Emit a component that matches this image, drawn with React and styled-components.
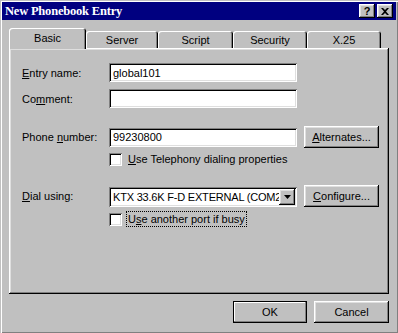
import styled, { createGlobalStyle } from "styled-components";

const GlobalStyle = createGlobalStyle`
  html, body {
    margin: 0;
    padding: 0;
    background: #c0c0c0;
  }
  body {
    font-family: "Liberation Sans", Arial, sans-serif;
    font-size: 11px;
    color: #000;
  }
  u {
    text-decoration: underline;
    text-decoration-thickness: 1px;
    text-underline-offset: 1px;
  }
`;

const raised = `
  box-shadow: inset -1px -1px #000, inset 1px 1px #fff,
    inset -2px -2px #808080, inset 2px 2px #dfdfdf;
`;

const sunken = `
  box-shadow: inset 1px 1px #808080, inset -1px -1px #fff,
    inset 2px 2px #000, inset -2px -2px #dfdfdf;
`;

const Window = styled.div`
  box-sizing: border-box;
  width: 398px;
  height: 333px;
  padding: 2px;
  background: #c0c0c0;
  box-shadow: inset 1px 1px #c0c0c0, inset 2px 2px #fff, inset -1px -1px #808080;
  display: flex;
  flex-direction: column;
`;

const TitleBar = styled.div`
  height: 18px;
  background: #000080;
  display: flex;
  align-items: center;
  padding: 0 3px 0 3px;
`;

const Title = styled.span`
  color: #fff;
  font-family: "Liberation Serif", "Times New Roman", serif;
  font-weight: bold;
  font-size: 12.5px;
  letter-spacing: -0.2px;
`;

const CaptionButtons = styled.div`
  margin-left: auto;
  display: flex;
  gap: 2px;
`;

const CaptionButton = styled.div`
  width: 16px;
  height: 14px;
  background: #c0c0c0;
  ${raised}
  display: flex;
  align-items: center;
  justify-content: center;
  font-weight: bold;
  font-size: 11px;
  line-height: 1;
`;

const Content = styled.div`
  padding: 8px 7px 0 7px;
  display: flex;
  flex-direction: column;
`;

const TabRow = styled.div`
  height: 20px;
  display: flex;
  align-items: flex-end;
`;

const Tab = styled.div`
  box-sizing: border-box;
  width: ${(p) => p.$w}px;
  height: ${(p) => (p.$active ? 21 : 17)}px;
  margin-bottom: ${(p) => (p.$active ? -1 : 0)}px;
  position: relative;
  z-index: ${(p) => (p.$active ? 2 : 1)};
  background: #c0c0c0;
  border-top-left-radius: 3px;
  border-top-right-radius: 3px;
  box-shadow: inset 1px 1px #fff, inset -1px 0 #000, inset -2px 0 #808080;
  display: flex;
  justify-content: center;
  padding-top: ${(p) => (p.$active ? 4 : 3)}px;
  font-size: 11px;
`;

const Panel = styled.div`
  box-sizing: border-box;
  height: 246px;
  ${raised}
  padding: 15px 0 0 13px;
  display: flex;
  flex-direction: column;
`;

const Row = styled.div`
  display: flex;
  align-items: ${(p) => p.$align || "center"};
  height: ${(p) => p.$h}px;
  margin-top: ${(p) => p.$mt || 0}px;
`;

const Label = styled.span`
  width: 87px;
  flex: none;
  align-self: center;
`;

const TextBox = styled.div`
  box-sizing: border-box;
  width: 188px;
  height: 19px;
  background: #fff;
  ${sunken}
  padding: 0 4px;
  display: flex;
  align-items: center;
`;

const Combo = styled.div`
  box-sizing: border-box;
  width: 188px;
  height: 20px;
  background: #fff;
  ${sunken}
  padding: 2px 2px 2px 4px;
  display: flex;
  align-items: center;
`;

const ComboText = styled.span`
  flex: 1;
  overflow: hidden;
  white-space: nowrap;
  letter-spacing: -0.2px;
`;

const DropButton = styled.div`
  width: 16px;
  height: 16px;
  flex: none;
  background: #c0c0c0;
  ${raised}
  display: flex;
  align-items: center;
  justify-content: center;
`;

const Button = styled.div`
  box-sizing: border-box;
  width: ${(p) => p.$w || 75}px;
  height: 22px;
  background: #c0c0c0;
  ${raised}
  ${(p) =>
    p.$default &&
    `border: 1px solid #000;
     box-shadow: inset -1px -1px #808080, inset 1px 1px #fff;`}
  display: flex;
  align-items: center;
  justify-content: center;
  margin-left: ${(p) => p.$ml || 0}px;
`;

const CheckBox = styled.div`
  box-sizing: border-box;
  width: 13px;
  height: 13px;
  flex: none;
  margin-left: 87px;
  background: #fff;
  ${sunken}
`;

const CheckLabel = styled.span`
  margin-left: 4px;
  padding: 1px 1px 1px 1px;
  border: 1px dotted ${(p) => (p.$focus ? "#000" : "transparent")};
  line-height: 12px;
`;

const ButtonRow = styled.div`
  display: flex;
  justify-content: flex-end;
  gap: 7px;
  margin-top: 7px;
`;

const tabs = [
  ["Basic", 77],
  ["Server", 72],
  ["Script", 75],
  ["Security", 74],
  ["X.25", 74],
];

export default function App() {
  return (
    <>
      <GlobalStyle />
      <Window>
        <TitleBar>
          <Title>New Phonebook Entry</Title>
          <CaptionButtons>
            <CaptionButton>?</CaptionButton>
            <CaptionButton>
              <svg width="8" height="7" viewBox="0 0 8 7">
                <path d="M0 0h2l2 2 2-2h2L5 3.5 8 7H6L4 5 2 7H0l3-3.5z" fill="#000" />
              </svg>
            </CaptionButton>
          </CaptionButtons>
        </TitleBar>
        <Content>
          <TabRow>
            {tabs.map(([name, w], i) => (
              <Tab key={name} $w={w} $active={i === 0}>
                {name}
              </Tab>
            ))}
          </TabRow>
          <Panel>
            <Row $h={19}>
              <Label>
                <u>E</u>ntry name:
              </Label>
              <TextBox>global101</TextBox>
            </Row>
            <Row $h={19} $mt={7}>
              <Label>
                Co<u>m</u>ment:
              </Label>
              <TextBox />
            </Row>
            <Row $h={22} $mt={18}>
              <Label>
                Phone <u>n</u>umber:
              </Label>
              <TextBox>99230800</TextBox>
              <Button $ml={7}>
                <span>
                  <u>A</u>lternates...
                </span>
              </Button>
            </Row>
            <Row $h={16} $mt={3}>
              <CheckBox />
              <CheckLabel>
                <u>U</u>se Telephony dialing properties
              </CheckLabel>
            </Row>
            <Row $h={22} $mt={18} $align="flex-end">
              <Label>
                <u>D</u>ial using:
              </Label>
              <Combo>
                <ComboText>KTX 33.6K F-D EXTERNAL (COM2)</ComboText>
                <DropButton>
                  <svg width="7" height="4" viewBox="0 0 7 4">
                    <path d="M0 0h7L3.5 4z" fill="#000" />
                  </svg>
                </DropButton>
              </Combo>
              <Button $ml={7}>
                <span>
                  <u>C</u>onfigure...
                </span>
              </Button>
            </Row>
            <Row $h={16} $mt={4}>
              <CheckBox />
              <CheckLabel $focus>
                U<u>s</u>e another port if busy
              </CheckLabel>
            </Row>
          </Panel>
          <ButtonRow>
            <Button $w={74} $default>
              OK
            </Button>
            <Button $w={75}>Cancel</Button>
          </ButtonRow>
        </Content>
      </Window>
    </>
  );
}
